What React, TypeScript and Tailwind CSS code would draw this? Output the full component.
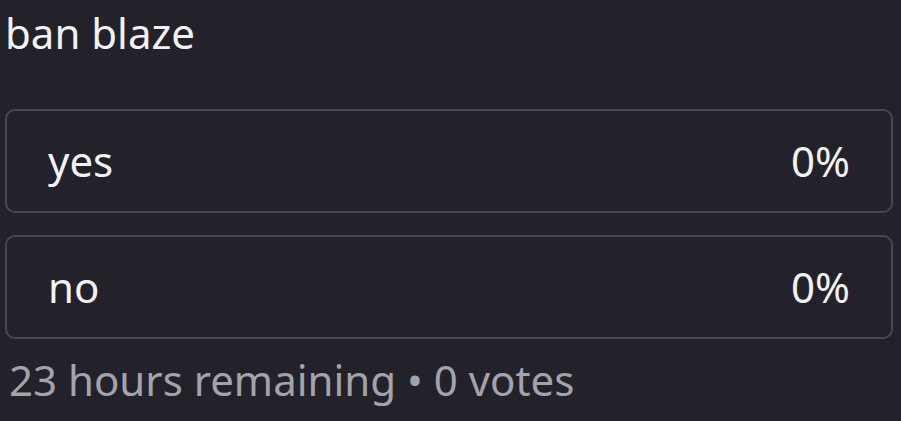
import React from "react";

interface PollOption {
    label: string;
    percent: number;
}

const options: Array<PollOption> = [
    { label: "yes", percent: 0 },
    { label: "no", percent: 0 },
];

const App: React.FC = () => {
    return (
        <div
            className="w-[901px] h-[421px] overflow-hidden bg-[#23222a] text-[42px]"
            style={{ fontFamily: '"Noto Sans", "Open Sans", sans-serif' }}
        >
            <div className="pl-[5px] pt-[5px] leading-[56px] text-[#f2f2f4]">ban blaze</div>

            <div className="mt-[48px] flex flex-col gap-[22px] pl-[5px] pr-[8px]">
                {options.map((opt) => (
                    <div
                        key={opt.label}
                        className="h-[104px] flex items-center justify-between rounded-[10px] border-2 border-[#474651] pl-[41px] pr-[41px] text-[#f2f2f4]"
                    >
                        <span className="leading-[56px]">{opt.label}</span>
                        <span className="leading-[56px]">{opt.percent}%</span>
                    </div>
                ))}
            </div>

            <div className="mt-[13px] pl-[9px] leading-[56px] text-[#a4a3ac]">
                23 hours remaining • 0 votes
            </div>
        </div>
    );
};

export default App;
